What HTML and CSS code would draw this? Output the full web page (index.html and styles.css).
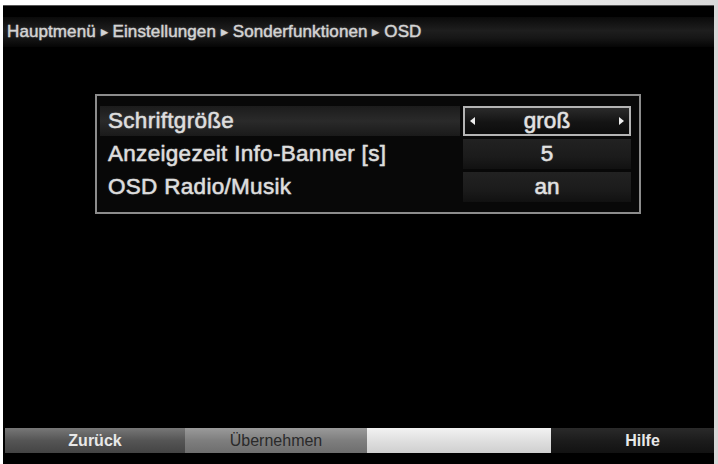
FILE: index.html
```html
<!DOCTYPE html>
<html lang="de">
<head>
<meta charset="utf-8">
<title>OSD</title>
<link rel="stylesheet" href="styles.css">
</head>
<body>
<div class="frame">
  <div class="screen">
    <div class="header">Hauptmenü <span class="sep">&#9654;</span> Einstellungen <span class="sep">&#9654;</span> Sonderfunktionen <span class="sep">&#9654;</span> OSD</div>
    <div class="main">
      <div class="panel">
        <div class="row row-active">
          <div class="label">Schriftgröße</div>
          <div class="value value-selected"><span class="arrow arrow-left"></span>groß<span class="arrow arrow-right"></span></div>
        </div>
        <div class="row">
          <div class="label">Anzeigezeit Info-Banner [s]</div>
          <div class="value">5</div>
        </div>
        <div class="row">
          <div class="label">OSD Radio/Musik</div>
          <div class="value">an</div>
        </div>
      </div>
    </div>
    <div class="footer">
      <div class="btn btn-red">Zurück</div>
      <div class="btn btn-green">Übernehmen</div>
      <div class="btn btn-yellow"></div>
      <div class="btn btn-blue">Hilfe</div>
    </div>
  </div>
</div>
</body>
</html>
```

FILE: styles.css
```css
html, body {
  margin: 0;
  padding: 0;
  background: #fff;
}
body {
  width: 718px;
  height: 464px;
  overflow: hidden;
  font-family: "Liberation Sans", Arial, sans-serif;
}
.frame {
  padding: 5px 4px 0 3px;
  height: 464px;
  box-sizing: border-box;
  background: linear-gradient(to right, #fff 0, #fff 50%, #d8d8d8 100%);
}
.screen {
  height: 459px;
  background: #000;
  display: flex;
  flex-direction: column;
  border-top: 1px solid #555;
  box-sizing: border-box;
}
.header {
  margin-top: 11px;
  height: 30px;
  line-height: 30px;
  padding-left: 4px;
  font-size: 17px;
  color: #d4d4d4;
  letter-spacing: 0.1px;
  -webkit-text-stroke: 0.4px #d4d4d4;
  background: linear-gradient(to bottom, #0a0a0a 0%, #1e1e1e 45%, #161616 70%, #050505 100%);
  text-shadow: 0 0 2px rgba(255,255,255,0.35);
}
.sep {
  font-size: 9px;
  position: relative;
  top: -2px;
}
.main {
  flex: 1;
  padding: 47px 0 0 92px;
}
.panel {
  border: 2px solid #8c8c8c;
  background: #080808;
  padding: 10px 8px 10px 3px;
  box-sizing: content-box;
  width: 531px;
  display: flex;
  flex-direction: column;
  gap: 3px;
}
.row {
  display: flex;
  height: 30px;
  align-items: stretch;
  gap: 3px;
}
.label {
  flex: 1;
  padding-left: 8px;
  font-size: 22.5px;
  letter-spacing: 0.3px;
  line-height: 30px;
  color: #dedede;
  -webkit-text-stroke: 0.5px #dedede;
  text-shadow: 0 0 2px rgba(255,255,255,0.3);
}
.row-active .label {
  background: linear-gradient(to bottom, #1c1c1c 0%, #2a2a2a 50%, #1a1a1a 100%);
}
.value {
  width: 168px;
  box-sizing: border-box;
  text-align: center;
  font-size: 22.5px;
  line-height: 30px;
  color: #e2e2e2;
  -webkit-text-stroke: 0.5px #e2e2e2;
  background: linear-gradient(to bottom, #222 0%, #1b1b1b 60%, #111 100%);
  position: relative;
  text-shadow: 0 0 2px rgba(255,255,255,0.3);
}
.value-selected {
  border: 2px solid #b4b4b4;
  line-height: 26px;
  background: linear-gradient(to bottom, #2a2a2a 0%, #141414 55%, #0c0c0c 100%);
}
.arrow {
  position: absolute;
  top: 9px;
  width: 0;
  height: 0;
  border-top: 4px solid transparent;
  border-bottom: 4px solid transparent;
}
.arrow-left {
  left: 5px;
  border-right: 5px solid #eee;
}
.arrow-right {
  right: 5px;
  border-left: 5px solid #eee;
}
.footer {
  display: flex;
  height: 25px;
  margin: auto 0 11px 2px;
}
.btn {
  height: 25px;
  line-height: 25px;
  text-align: center;
  font-size: 16px;
  font-weight: bold;
}
.btn-red {
  width: 180px;
  color: #e8e8e8;
  background: linear-gradient(to bottom, #777 0%, #555 50%, #444 100%);
}
.btn-green {
  width: 182px;
  font-weight: normal;
  color: #2a2a2a;
  background: linear-gradient(to bottom, #9a9a9a 0%, #7e7e7e 50%, #6e6e6e 100%);
}
.btn-yellow {
  width: 184px;
  background: linear-gradient(to bottom, #f2f2f2 0%, #dcdcdc 60%, #cfcfcf 100%);
}
.btn-blue {
  flex: 1;
  padding-left: 20px;
  color: #e8e8e8;
  background: linear-gradient(to bottom, #2a2a2a 0%, #1c1c1c 50%, #121212 100%);
}
```
